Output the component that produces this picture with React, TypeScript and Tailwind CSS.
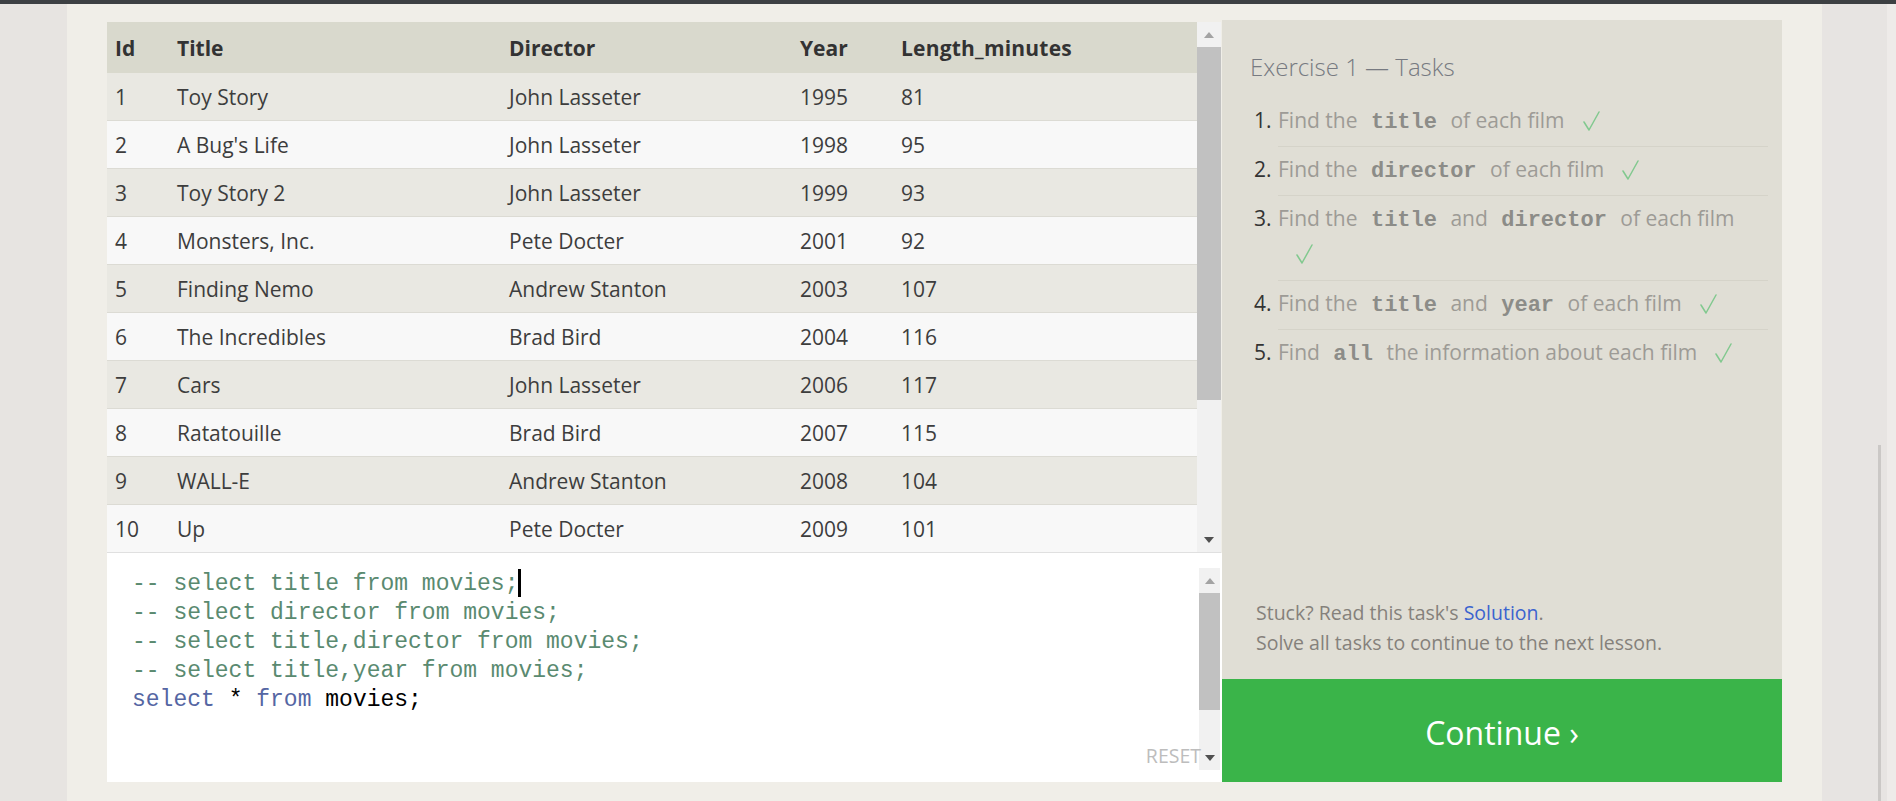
import React from "react";

const movies = [
  [1, "Toy Story", "John Lasseter", 1995, 81],
  [2, "A Bug's Life", "John Lasseter", 1998, 95],
  [3, "Toy Story 2", "John Lasseter", 1999, 93],
  [4, "Monsters, Inc.", "Pete Docter", 2001, 92],
  [5, "Finding Nemo", "Andrew Stanton", 2003, 107],
  [6, "The Incredibles", "Brad Bird", 2004, 116],
  [7, "Cars", "John Lasseter", 2006, 117],
  [8, "Ratatouille", "Brad Bird", 2007, 115],
  [9, "WALL-E", "Andrew Stanton", 2008, 104],
  [10, "Up", "Pete Docter", 2009, 101],
];

const sans = { fontFamily: '"Open Sans", "Noto Sans", Arial, sans-serif' };
const mono = { fontFamily: '"Liberation Mono", "DejaVu Sans Mono", monospace' };

function UpArrow() {
  return (
    <div className="h-[25px] flex items-center justify-center shrink-0">
      <svg width="10" height="6" viewBox="0 0 10 6">
        <polygon points="0,6 5,0 10,6" fill="#a3a3a3" />
      </svg>
    </div>
  );
}

function DownArrow() {
  return (
    <div className="h-[25px] flex items-center justify-center shrink-0">
      <svg width="10" height="6" viewBox="0 0 10 6">
        <polygon points="0,0 10,0 5,6" fill="#505050" />
      </svg>
    </div>
  );
}

function Check({ className = "" }: { className?: string }) {
  return (
    <svg
      width="17"
      height="20"
      viewBox="0 0 17 20"
      className={"inline-block align-[-3px] " + className}
    >
      <polyline
        points="1,11 6,19 16,1"
        fill="none"
        stroke="#82c98f"
        strokeWidth="1.5"
        strokeLinejoin="round"
        strokeLinecap="round"
      />
    </svg>
  );
}

function Code({ children }: { children: React.ReactNode }) {
  return (
    <code style={mono} className="px-[8px] text-[22px] leading-none font-bold text-[#8c8c88]">
      {children}
    </code>
  );
}

function Task({
  n,
  children,
  last,
  wrapCheck,
}: {
  n: number;
  children: React.ReactNode;
  last?: boolean;
  wrapCheck?: boolean;
}) {
  return (
    <li className="flex">
      <span className="w-[24px] shrink-0 pt-[5px] text-[21px] leading-[35px] text-[#333]">
        {n}.
      </span>
      <div
        className={
          "flex-1 pt-[5px] text-[21px] leading-[35px] text-[#9d9b96] " +
          (wrapCheck ? "pb-[9px] " : "pb-[8px] ") +
          (last ? "" : "border-b border-[#d5d3c9]")
        }
      >
        {wrapCheck ? (
          <>
            <div className="whitespace-nowrap h-[35px]">{children}</div>
            <div className="pl-[18px] h-[35px]">
              <Check />
            </div>
          </>
        ) : (
          <div className="whitespace-nowrap h-[35px]">
            {children}
            <Check className="ml-[18px]" />
          </div>
        )}
      </div>
    </li>
  );
}

export default function App() {
  const comment = "text-[#5a8a70]";
  const kw = "text-[#5566a3]";
  return (
    <div
      style={sans}
      className="w-[1896px] h-[801px] overflow-hidden flex flex-col bg-[#e7e4e2]"
    >
      <div className="h-[4px] shrink-0 bg-[#3d4043]" />
      <div className="flex flex-1 min-h-0">
        <div className="w-[67px] shrink-0 bg-[#e7e4e1]" />
        <div className="w-[1755px] shrink-0 bg-[#f0eee8] flex pl-[40px] pt-[16px]">
          {/* left column */}
          <div className="w-[1115px] shrink-0 mt-[2px] flex flex-col">
            {/* table block */}
            <div className="flex h-[531px]">
              <div className="w-[1090px] flex flex-col text-[21px] text-[#3d3d3d]">
                <div className="grid grid-cols-[62px_332px_291px_101px_1fr] h-[51px] items-center pt-[2px] bg-[#d9d9cd] font-bold text-[#333]">
                  <div className="pl-[8px]">Id</div>
                  <div className="pl-[8px]">Title</div>
                  <div className="pl-[8px]">Director</div>
                  <div className="pl-[8px]">Year</div>
                  <div className="pl-[8px] tracking-[0.2px]">Length_minutes</div>
                </div>
                {movies.map((m, i) => (
                  <div
                    key={i}
                    className={
                      "grid grid-cols-[62px_332px_291px_101px_1fr] h-[48px] items-center pt-[2px] " +
                      (i === movies.length - 1
                        ? "border-b border-[#e0e0e0] "
                        : "border-b border-[#dcdbd4] ") +
                      (i % 2 === 0 ? "bg-[#e9e8e2]" : "bg-[#f8f8f8]")
                    }
                  >
                    <div className="pl-[8px]">{m[0]}</div>
                    <div className="pl-[8px]">{m[1]}</div>
                    <div className="pl-[8px]">{m[2]}</div>
                    <div className="pl-[8px]">{m[3]}</div>
                    <div className="pl-[8px]">{m[4]}</div>
                  </div>
                ))}
              </div>
              <div className="w-[24px] flex flex-col bg-[#f1f1f1] border-b border-[#e0e0e0]">
                <UpArrow />
                <div className="h-[353px] bg-[#c1c1c1]" />
                <div className="flex-1" />
                <DownArrow />
              </div>
              <div className="w-[1px]" />
            </div>
            {/* editor */}
            <div className="relative flex h-[229px] bg-white">
              <div style={mono} className="flex-1 pl-[25px] pt-[16px] text-[23px] leading-[29px] whitespace-pre">
                <div className={comment}>
                  -- select title from movies;
                  <span className="inline-block w-[3px] h-[28px] bg-black align-[-7px]" />
                </div>
                <div className={comment}>-- select director from movies;</div>
                <div className={comment}>-- select title,director from movies;</div>
                <div className={comment}>-- select title,year from movies;</div>
                <div>
                  <span className={kw}>select</span>
                  <span className="text-black"> * </span>
                  <span className={kw}>from</span>
                  <span className="text-black"> movies;</span>
                </div>
              </div>
              <div className="w-[21px] mt-[15px] mb-[12px] mr-[2px] flex flex-col bg-[#f1f1f1]">
                <UpArrow />
                <div className="h-[117px] bg-[#c1c1c1]" />
                <div className="flex-1" />
                <DownArrow />
              </div>
              <div className="absolute right-[21px] bottom-[13px] text-[19.5px] leading-[26px] text-[#bdbdbd]">
                RESET
              </div>
            </div>
          </div>
          {/* right panel */}
          <div className="w-[560px] shrink-0 h-[762px] bg-[#e0ded5] flex flex-col">
            <div className="pl-[28px] pt-[29px] text-[24px] leading-[36px] font-light text-[#777a81]">
              Exercise 1 — Tasks
            </div>
            <ol className="ml-[32px] mr-[14px] mt-[13px]">
              <Task n={1}>
                Find the <Code>title</Code> of each film
              </Task>
              <Task n={2}>
                Find the <Code>director</Code> of each film
              </Task>
              <Task n={3} wrapCheck>
                Find the <Code>title</Code> and <Code>director</Code> of each film
              </Task>
              <Task n={4}>
                Find the <Code>title</Code> and <Code>year</Code> of each film
              </Task>
              <Task n={5} last>
                Find <Code>all</Code> the information about each film
              </Task>
            </ol>
            <div className="flex-1" />
            <div className="pl-[34px] pb-[21px] text-[19.5px] leading-[30px] text-[#85817b]">
              <div>
                Stuck? Read this task's <span className="text-[#3b63cf]">Solution</span>.
              </div>
              <div>Solve all tasks to continue to the next lesson.</div>
            </div>
            <div className="h-[103px] shrink-0 bg-[#3ab449] flex items-center justify-center pt-[4px] text-white text-[32px]">
              Continue ›
            </div>
          </div>
        </div>
        <div className="flex-1 flex">
          <div className="w-[56px] bg-[#e7e4e2]" />
          <div className="w-[3px] flex flex-col bg-[#e7e4e2]">
            <div className="h-[441px]" />
            <div className="flex-1 bg-[#cbc8c6]" />
          </div>
          <div className="w-[6px] bg-[#e7e4e2]" />
          <div className="flex-1 bg-[#eeebe9]" />
        </div>
      </div>
    </div>
  );
}
